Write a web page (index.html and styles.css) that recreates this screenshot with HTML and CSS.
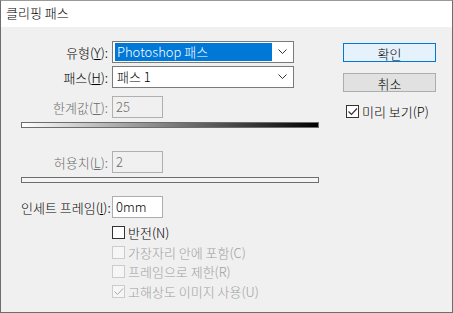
FILE: index.html
```html
<!DOCTYPE html>
<html>

<head lang="ko">
    <meta charset="UTF-8">
    <title>클리핑 패스</title>
    <link rel="stylesheet" href="styles.css">
</head>

<body>
    <div class="dialog">
        <div class="titlebar">클리핑 패스</div>
        <div class="content">
            <div class="form">
                <div class="row">
                    <label>유형(<u>Y</u>):</label>
                    <div class="select">
                        <span class="value selected">Photoshop 패스</span>
                        <svg class="chevron" width="9" height="6" viewBox="0 0 9 6"><polyline points="0.5,0.5 4.5,4.5 8.5,0.5" fill="none" stroke="#333" stroke-width="1"/></svg>
                    </div>
                </div>
                <div class="row row-path">
                    <label>패스(<u>H</u>):</label>
                    <div class="select">
                        <span class="value">패스 1</span>
                        <svg class="chevron" width="9" height="6" viewBox="0 0 9 6"><polyline points="0.5,0.5 4.5,4.5 8.5,0.5" fill="none" stroke="#333" stroke-width="1"/></svg>
                    </div>
                </div>
                <div class="row row-threshold disabled">
                    <label>한계값(<u>T</u>):</label>
                    <div class="field">25</div>
                </div>
                <div class="slider gradient"></div>
                <div class="row row-tolerance disabled">
                    <label>허용치(<u>L</u>):</label>
                    <div class="field">2</div>
                </div>
                <div class="slider plain"></div>
                <div class="row row-inset">
                    <label>인세트 프레임(<u>I</u>):</label>
                    <div class="field enabled">0mm</div>
                </div>
                <div class="checks">
                    <div class="check">
                        <span class="box"></span>반전(N)
                    </div>
                    <div class="check disabled">
                        <span class="box"></span>가장자리 안에 포함(C)
                    </div>
                    <div class="check disabled">
                        <span class="box"></span>프레임으로 제한(R)
                    </div>
                    <div class="check disabled">
                        <span class="box"><svg width="11" height="11" viewBox="0 0 11 11"><polyline points="1.5,5.5 4.5,8.5 10,2.5" fill="none" stroke="#a8a8a8" stroke-width="1"/></svg></span>고해상도 이미지 사용(U)
                    </div>
                </div>
            </div>
            <div class="side">
                <button type="button" class="btn primary">확인</button>
                <button type="button" class="btn">취소</button>
                <div class="check preview">
                    <span class="box"><svg width="11" height="11" viewBox="0 0 11 11"><polyline points="1.5,5.5 4.5,8.5 10,2.5" fill="none" stroke="#333" stroke-width="1.2"/></svg></span>미리 보기(P)
                </div>
            </div>
        </div>
    </div>
</body>

</html>
```

FILE: styles.css
```css
* {
    margin: 0;
    padding: 0;
    box-sizing: border-box;
}

body {
    font-family: "Noto Sans CJK KR", "Noto Sans", sans-serif;
    font-size: 13px;
    font-weight: 300;
    color: #000;
    background: #6a6a6a;
}

.dialog {
    width: 453px;
    height: 313px;
    border: 1px solid #6d6d6d;
    border-top-color: #9a9a9a;
    background: #f0f0f0;
}

.titlebar {
    height: 26px;
    line-height: 24px;
    padding-left: 5px;
    background: #fff;
}

.content {
    display: flex;
    padding: 14px 0 0 20px;
}

.form {
    width: 298px;
}

.row {
    display: flex;
    align-items: center;
    height: 22px;
}

.row label {
    width: 87px;
    margin-right: 4px;
    text-align: right;
    white-space: nowrap;
}

.row-path {
    margin-top: 3px;
}

.row-threshold {
    margin-top: 8px;
}

.row-tolerance {
    margin-top: 23px;
}

.row-inset {
    margin-top: 13px;
}

.disabled {
    color: #6d6d6d;
}

.select {
    display: flex;
    align-items: center;
    width: 182px;
    height: 22px;
    padding: 1px 0 1px 2px;
    border: 1px solid #7a7a7a;
    background: #fff;
}

.select .value {
    flex: 1;
    height: 18px;
    line-height: 17px;
    padding-left: 2px;
}

.select .selected {
    background: #0078d7;
    color: #fff;
}

.chevron {
    margin: 0 6px 0 6px;
}

.field {
    width: 51px;
    height: 22px;
    line-height: 19px;
    padding-left: 3px;
    border: 1px solid #b0b0b0;
    background: #f0f0f0;
}

.field.enabled {
    background: #fff;
    border-color: #adadad;
}

.slider {
    height: 6px;
    margin-top: 4px;
    border: 1px solid #6d6d6d;
}

.slider.gradient {
    background: linear-gradient(to right, #fff, #8a8a8a 45%, #000);
}

.slider.plain {
    background: #f4f4f4;
}

.checks {
    margin: 5px 0 0 91px;
}

.check {
    display: flex;
    align-items: center;
    height: 19.5px;
    white-space: nowrap;
}

.check .box {
    display: flex;
    align-items: center;
    justify-content: center;
    flex: none;
    width: 13px;
    height: 13px;
    margin-right: 3px;
    border: 1px solid #333;
    background: #fff;
}

.check.disabled {
    color: #a0a0a0;
}

.check.disabled .box {
    border-color: #cccccc;
    background: #f6f6f6;
}

.side {
    width: 93px;
    margin-left: 24px;
    padding-top: 2px;
}

.btn {
    display: block;
    width: 93px;
    height: 19px;
    font-family: inherit;
    font-size: 13px;
    font-weight: 300;
    color: #000;
    border: 1px solid #adadad;
    background: #e1e1e1;
}

.btn + .btn {
    margin-top: 11px;
}

.btn.primary {
    border-color: #0078d7;
    background: #e5f1fb;
}

.preview {
    margin-top: 10px;
    padding-left: 3px;
}
```
